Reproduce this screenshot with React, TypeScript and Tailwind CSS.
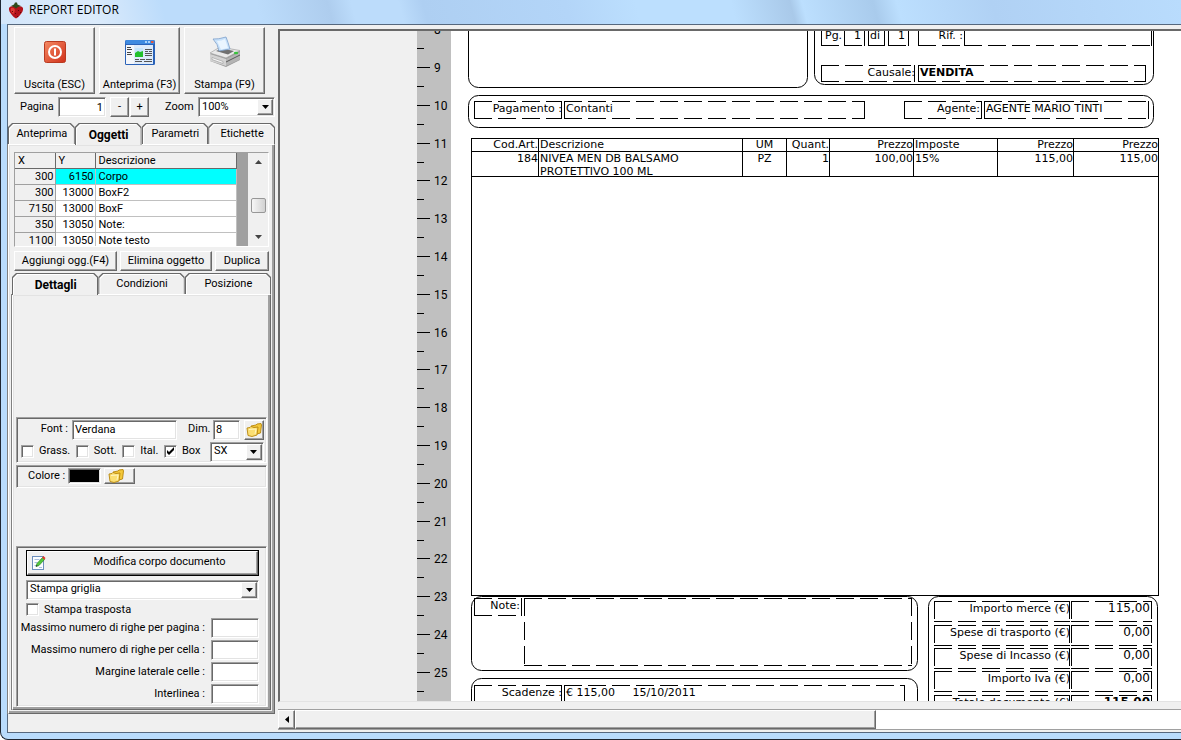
import React, { useState } from "react";

// classic win32 bevels
const RAISED =
  "bg-[#f0f0f0] border border-t-white border-l-white border-r-[#696969] border-b-[#696969] shadow-[inset_-1px_-1px_0_#a0a0a0]";
const SUNKEN =
  "bg-white border border-t-[#a0a0a0] border-l-[#a0a0a0] border-r-white border-b-white shadow-[inset_1px_1px_0_#696969,inset_-1px_-1px_0_#e3e3e3]";
const GROUP =
  "border border-t-[#a0a0a0] border-l-[#a0a0a0] border-r-white border-b-white shadow-[inset_1px_1px_0_#696969,inset_-1px_-1px_0_#e3e3e3]";
const PANEL =
  "border border-t-white border-l-white border-r-[#696969] border-b-[#696969] shadow-[inset_-2px_-2px_0_#a0a0a0,inset_1px_1px_0_#e3e3e3,-1px_0_0_#808080]";

const StrawberryIcon = () => (
  <svg width="16" height="17" viewBox="0 0 16 17">
    <path d="M1 6 Q2 3.5 8 4 Q14 3.5 15 6 Q15.5 9 12.5 12.5 Q10 16 8 16.5 Q6 16 3.5 12.5 Q0.5 9 1 6z" fill="#b3131b" />
    <path d="M3 6 Q6 5 7 8 Q6 12 5 12 Q2 9 3 6z" fill="#dd3a34" />
    <path d="M3 4 L6 2.5 L7 0.5 L9 0.5 L9.5 2.5 L13 4 L10 5 L8 6.5 L6 5z" fill="#2e4a1c" />
    <path d="M10 8h1v1h-1z M7 11h1v1h-1z M4 9h1v1h-1z M12 10h1v1h-1z M9 14h1v1h-1z" fill="#5e070c" />
  </svg>
);

const PowerIcon = () => (
  <svg width="24" height="24" viewBox="0 0 24 24">
    <defs>
      <linearGradient id="pw" x1="0" y1="0" x2="1" y2="1">
        <stop offset="0" stopColor="#f58a63" />
        <stop offset="1" stopColor="#d0301a" />
      </linearGradient>
    </defs>
    <rect x="1.5" y="1.5" width="21" height="21" rx="2" fill="url(#pw)" stroke="#b93a20" />
    <circle cx="12" cy="12" r="6" fill="none" stroke="#fff" strokeWidth="2" />
    <path d="M12 8.5v7" stroke="#fff" strokeWidth="2" />
  </svg>
);

const PreviewIcon = () => (
  <svg width="32" height="26" viewBox="0 0 32 26">
    <rect x="1" y="1" width="30" height="25" rx="1.5" fill="#2a62b8" />
    <rect x="1.5" y="1" width="29" height="4" rx="1" fill="#3f8ae0" />
    <path d="M21 2h2v2h-2z M24 2h2v2h-2z" fill="#a9d2fa" />
    <path d="M27 2h2.5v2h-2.5z" fill="#e2553b" />
    <rect x="2" y="6" width="8" height="19" fill="#f4f6fa" />
    <rect x="10" y="6" width="19" height="19" fill="#ddeafa" />
    <path d="M3 8.5h4 M3 10.5h5 M3 13.5h4 M3 15.5h5" stroke="#444" />
    <rect x="11" y="9" width="8" height="5" fill="#c5e4fb" />
    <path d="M11 14l3-2 2 1 3-1v6h-8z" fill="#22c02c" />
    <path d="M21 10.5h7 M21 12.5h3 M25 12.5h3 M21 14.5h7 M21 16.5h7 M11 20.5h4 M16 20.5h5 M22 20.5h6 M11 22.5h7 M20 22.5h8" stroke="#555" />
  </svg>
);

const PrinterIcon = () => (
  <svg width="32" height="32" viewBox="0 0 32 32">
    <path d="M1 18 L12 11 L31 15 L31 24 L17 31 L1 25z" fill="#9a9a9a" />
    <path d="M1 17 L11 11 L31 14.500 L17 22z" fill="#e9e9e9" stroke="#a5a5a5" strokeWidth="0.7" />
    <path d="M1 18 L17 23 L17 30 L1 25z" fill="#d3d3d3" />
    <path d="M17 23 L31 16 L31 23.500 L17 30z" fill="#b4b4b4" />
    <path d="M17 26 L31 19" stroke="#5a5a5a" />
    <path d="M3 21.500 L14 25.500 L14 27.500 L3 23.500z" fill="#f8f8f8" stroke="#8a8a8a" strokeWidth="0.5" />
    <path d="M7 15 L19 18.500 L25 15 L13 12.500z" fill="#707070" />
    <path d="M4 3 Q9 3.500 17 1 Q19 6 21 13 L10 15 Q9 8 4 3z" fill="#c8e2fb" stroke="#7d9fca" strokeWidth="0.800" />
    <path d="M8 5 Q13 5 16 3 L19 12 L12 13.500z" fill="#eaf5ff" />
    <ellipse cx="27" cy="17" rx="2.200" ry="1.300" fill="#37c33a" />
  </svg>
);

const FolderIcon = () => (
  <svg width="16" height="14" viewBox="0 0 16 14">
    <path d="M5 3 L10 2 L11 1 L15 0.500 L15.500 2 L14.500 10 L7 12z" fill="#f3c83a" stroke="#b8860b" strokeWidth="0.900" />
    <path d="M1 5 L4 4.500 L5 3.500 L8 4.500 L12 4 L11 12 L6 13.500 L2 12.500z" fill="#fbdf73" stroke="#b8860b" strokeWidth="0.900" />
    <path d="M3 6.500 L10 6 L9 11" stroke="#fff4bf" fill="none" />
  </svg>
);

const EditIcon = () => (
  <svg width="14" height="15" viewBox="0 0 14 15">
    <rect x="0.500" y="1.500" width="11" height="13" fill="#fbfdff" stroke="#6c8fbd" />
    <path d="M2.500 4.500h5 M2.500 7.500h3 M2.500 10.500h2 M7 12.500h3" stroke="#a9bfdd" />
    <path d="M4 11.500 L5 8.500 L10.500 2.500 L12.500 4.500 L7 10.500z" fill="#53c93d" stroke="#2b8222" strokeWidth="0.700" />
    <path d="M10 2.500 L11.500 1 L13.500 3 L12.300 4.800z" fill="#e23b2d" />
    <path d="M4 11.500l0.500-1.600 1.200 1.100z" fill="#222" />
  </svg>
);

interface TabsProps {
  items: string[];
  active: string;
  onSelect: (name: string) => void;
}

const CHAMFER = "[clip-path:polygon(0_100%,0_4px,4px_0,calc(100%-4px)_0,100%_4px,100%_100%)]";

const Tabs: React.FC<TabsProps> = ({ items, active, onSelect }) => (
  <div role="tablist" className="flex">
    {items.map((item) => (
      <button
        key={item}
        role="tab"
        aria-selected={item === active}
        onClick={() => onSelect(item)}
        className={`flex h-[21px] flex-1 bg-[#696969] px-px pt-px ${CHAMFER} ${item === active ? "z-10 -mb-px h-[22px]" : ""}`}
      >
        <span className={`flex flex-1 bg-white pt-px pl-px ${CHAMFER}`}>
          <span
            className={`flex flex-1 items-center justify-center bg-[#f0f0f0] ${CHAMFER} ${item === active ? "text-[12px] font-bold" : ""}`}
          >
            {item}
          </span>
        </span>
      </button>
    ))}
  </div>
);

interface SelectProps {
  label: string;
  options: string[];
  className: string;
}

const Select: React.FC<SelectProps> = ({ label, options, className }) => (
  <div className={`relative h-5 ${SUNKEN} ${className}`}>
    <select aria-label={label} className="h-full w-full appearance-none bg-transparent pl-[3px] outline-none">
      {options.map((o) => (
        <option key={o}>{o}</option>
      ))}
    </select>
    <span className={`pointer-events-none absolute top-px right-px bottom-px flex w-4 items-center justify-center ${RAISED}`}>
      <svg width="7" height="4" viewBox="0 0 7 4">
        <path d="M0 0h7L3.500 4z" />
      </svg>
    </span>
  </div>
);

const Check: React.FC<{ label: string; checked?: boolean }> = ({ label, checked }) => (
  <label className="flex items-center gap-[5px]">
    <span className="grid">
      <input
        type="checkbox"
        defaultChecked={checked}
        className={`peer col-start-1 row-start-1 h-[13px] w-[13px] appearance-none ${SUNKEN}`}
      />
      <svg
        width="13"
        height="13"
        viewBox="0 0 13 13"
        className="pointer-events-none invisible col-start-1 row-start-1 peer-checked:visible"
      >
        <path d="M3 5v3l2 2 5-5v-3l-5 5z" />
      </svg>
    </span>
    {label}
  </label>
);

const objects = [
  { x: 300, y: 6150, name: "Corpo" },
  { x: 300, y: 13000, name: "BoxF2" },
  { x: 7150, y: 13000, name: "BoxF" },
  { x: 350, y: 13050, name: "Note:" },
  { x: 1100, y: 13050, name: "Note testo" },
];

const ObjectGrid = () => {
  const [selected, setSelected] = useState(0);
  return (
    <div className={`mx-[5px] mt-[7px] flex h-[95px] overflow-hidden ${GROUP}`}>
      <table className="h-fit flex-1 table-fixed border-collapse leading-[14px]">
        <colgroup>
          <col className="w-10" />
          <col className="w-10" />
          <col />
        </colgroup>
        <thead>
          <tr className="bg-[#f0f0f0] text-left">
            <th className="border-r border-b border-[#696969] pt-px pl-[3px] font-normal">X</th>
            <th className="border-r border-b border-[#696969] pt-px pl-[3px] font-normal">Y</th>
            <th className="border-r border-b border-[#696969] pt-px pl-[3px] font-normal">Descrizione</th>
          </tr>
        </thead>
        <tbody>
          {objects.map((o, i) => (
            <tr key={i} onClick={() => setSelected(i)} className={i === selected ? "bg-[#00ffff]" : "bg-white"}>
              <td className="border-r border-b border-[#a0a0a0] bg-[#f0f0f0] pt-px pr-px text-right">{o.x}</td>
              <td className="border-r border-b border-[#c0c0c0] pt-px pr-px text-right">{o.y}</td>
              <td className="border-r border-b border-[#c0c0c0] pt-px pl-[3px]">{o.name}</td>
            </tr>
          ))}
        </tbody>
      </table>
      <div className="w-[11px] bg-[#a0a0a0]" />
      <div className="flex w-5 flex-col items-center justify-between bg-[#f0f0f0] py-[7px]">
        <svg width="7" height="4" viewBox="0 0 7 4">
          <path d="M0 4h7L3.500 0z" fill="#444" />
        </svg>
        <div className="mt-3 h-[15px] w-[15px] rounded-xs border border-[#979797] bg-linear-to-r from-[#f6f6f6] to-[#d2d2d2]" />
        <svg width="7" height="4" viewBox="0 0 7 4">
          <path d="M0 0h7L3.500 4z" fill="#444" />
        </svg>
      </div>
    </div>
  );
};

const numericFields = [
  "Massimo numero di righe per pagina :",
  "Massimo numero di righe per cella :",
  "Margine laterale celle :",
  "Interlinea :",
];

const SidePanel = () => {
  const [mainTab, setMainTab] = useState("Oggetti");
  const [detailTab, setDetailTab] = useState("Dettagli");

  return (
    <aside className="flex w-[267px] shrink-0 flex-col pt-[2px] pb-[18px]">
      <div className="flex gap-1 pl-[6px]">
        {[
          { label: "Uscita (ESC)", icon: <PowerIcon /> },
          { label: "Anteprima (F3)", icon: <PreviewIcon /> },
          { label: "Stampa (F9)", icon: <PrinterIcon /> },
        ].map((b) => (
          <button key={b.label} className={`flex h-[67px] w-[81px] flex-col items-center ${RAISED}`}>
            <span className="flex h-[49px] items-center">{b.icon}</span>
            {b.label}
          </button>
        ))}
      </div>

      <div className="mt-[3px] mb-[6px] flex items-center pl-3">
        <label htmlFor="pagina" className="w-[38px]">
          Pagina
        </label>
        <input id="pagina" defaultValue="1" className={`h-5 w-12 pr-[2px] text-right outline-none ${SUNKEN}`} />
        <button className={`ml-1 h-5 w-[19px] ${RAISED}`}>-</button>
        <button className={`ml-px h-5 w-[19px] ${RAISED}`}>+</button>
        <span className="ml-4 w-[33px]">Zoom</span>
        <Select label="Zoom" options={["100%", "75%", "50%"]} className="flex-1" />
      </div>

      <Tabs items={["Anteprima", "Oggetti", "Parametri", "Etichette"]} active={mainTab} onSelect={setMainTab} />
      <div className={`flex flex-1 flex-col pb-[3px] ${PANEL}`}>
        <ObjectGrid />
        <div className="mx-[5px] mt-1 mb-[2px] flex gap-[3px]">
          <button className={`h-5 w-[103px] ${RAISED}`}>Aggiungi ogg.(F4)</button>
          <button className={`h-5 w-[92px] ${RAISED}`}>Elimina oggetto</button>
          <button className={`h-5 flex-1 ${RAISED}`}>Duplica</button>
        </div>

        <div className="mx-[3px] flex flex-1 flex-col">
          <Tabs items={["Dettagli", "Condizioni", "Posizione"]} active={detailTab} onSelect={setDetailTab} />
          <div className={`flex flex-1 flex-col px-[3px] pb-[2px] ${PANEL}`}>
            <div className="flex-21" />
            <div className={`flex flex-col gap-[2px] pt-[2px] pr-[2px] pl-1 ${GROUP}`}>
              <div className="flex items-center">
                <label htmlFor="font" className="w-[51px] pr-1 text-right">
                  Font :
                </label>
                <input id="font" defaultValue="Verdana" className={`h-5 w-[105px] pl-[2px] outline-none ${SUNKEN}`} />
                <label htmlFor="dim" className="ml-[11px] w-[25px]">
                  Dim.
                </label>
                <input id="dim" defaultValue="8" className={`h-5 w-[27px] pl-[2px] outline-none ${SUNKEN}`} />
                <button aria-label="Scegli font" className={`ml-auto flex h-5 w-5 items-center justify-center ${RAISED}`}>
                  <FolderIcon />
                </button>
              </div>
              <div className="flex items-center justify-between">
                <Check label="Grass." />
                <Check label="Sott." />
                <Check label="Ital." />
                <Check label="Box" checked />
                <Select label="Allineamento" options={["SX", "CX", "DX"]} className="ml-1 w-[54px]" />
              </div>
            </div>
            <div className={`mt-[2px] flex h-[23px] items-center pl-[11px] ${GROUP}`}>
              <span className="w-10">Colore :</span>
              <span className={`flex h-4 w-[33px] p-px ${SUNKEN}`}>
                <span className="flex-1 bg-black" />
              </span>
              <button aria-label="Scegli colore" className={`ml-[3px] flex h-4 w-[31px] items-center pl-[3px] ${RAISED}`}>
                <FolderIcon />
              </button>
            </div>
            <div className="flex-10" />
            <div className={`flex flex-col pt-[3px] pr-[7px] pl-[9px] ${GROUP}`}>
              <div className="flex border border-black">
                <button className={`flex h-6 flex-1 items-center pl-1 ${RAISED}`}>
                  <EditIcon />
                  <span className="flex-1 pl-4">Modifica corpo documento</span>
                </button>
              </div>
              <Select label="Tipo stampa" options={["Stampa griglia", "Stampa testo"]} className="mt-1 mb-[2px]" />
              <Check label="Stampa trasposta" />
              {numericFields.map((f) => (
                <label key={f} className="mb-[2px] flex items-center justify-end gap-[6px] whitespace-nowrap">
                  {f}
                  <input className={`h-5 w-12 outline-none ${SUNKEN}`} />
                </label>
              ))}
            </div>
          </div>
        </div>
      </div>
    </aside>
  );
};

// one tick per half centimetre, 8 to 25
const Ruler = () => {
  const cm = Array.from({ length: 18 }, (_, i) => i + 8);
  return (
    <svg className="h-full w-[34px] shrink-0 bg-[#c0c0c0]" fontSize="12" shapeRendering="crispEdges">
      {cm.map((n) => {
        const y = Math.round(36 + (n - 9) * 37.8);
        return (
          <g key={n}>
            <rect x="0" y={y} width="13" height="1" />
            <rect x="0" y={y + 19} width="7" height="1" />
            <text x="17" y={y + 5}>
              {n}
            </text>
          </g>
        );
      })}
    </svg>
  );
};

// x, y, width, height on the page
const roundedBoxes = [
  [17, -40, 339, 96],
  [363, -40, 339, 93],
  [17, 64, 685, 32],
  [20, 565, 446, 74],
  [20, 647, 446, 74],
  [477, 565, 229, 150],
];

interface ReportField {
  x: number;
  y: number;
  w: number;
  h: number;
  text: string;
  cls?: string;
}

const fields: ReportField[] = [
  { x: 370, y: -3, w: 23, h: 17, text: "Pg.", cls: "pl-1" },
  { x: 393, y: -3, w: 20, h: 17, text: "1", cls: "text-right pr-1" },
  { x: 417, y: -3, w: 16, h: 17, text: "di" },
  { x: 437, y: -3, w: 20, h: 17, text: "1", cls: "text-right pr-1" },
  { x: 467, y: -3, w: 46, h: 17, text: "Rif. :", cls: "text-right pr-[2px]" },
  { x: 513, y: -3, w: 187, h: 17, text: "" },
  { x: 370, y: 34, w: 93, h: 16, text: "Causale:", cls: "text-right" },
  { x: 467, y: 34, w: 227, h: 16, text: "VENDITA", cls: "pl-[2px] font-bold" },
  { x: 23, y: 70, w: 87, h: 17, text: "Pagamento :", cls: "text-right" },
  { x: 113, y: 70, w: 300, h: 17, text: "Contanti" },
  { x: 453, y: 70, w: 77, h: 17, text: "Agente:", cls: "text-right pr-[2px]" },
  { x: 533, y: 70, w: 164, h: 17, text: "AGENTE MARIO TINTI" },
  { x: 23, y: 567, w: 47, h: 17, text: "Note:", cls: "text-right pr-[2px]" },
  { x: 73, y: 567, w: 387, h: 67, text: "" },
  { x: 23, y: 654, w: 87, h: 30, text: "Scadenze :", cls: "text-right" },
  { x: 113, y: 654, w: 340, h: 30, text: "€ 115,00     15/10/2011" },
];

const totals = [
  { y: 570, label: "Importo merce (€)", value: "115,00" },
  { y: 594, label: "Spese di trasporto (€)", value: "0,00" },
  { y: 617, label: "Spese di Incasso (€)", value: "0,00" },
  { y: 640, label: "Importo Iva (€)", value: "0,00" },
  { y: 664, label: "Totale documento (€)", value: "115,00", cls: "font-bold" },
];

totals.forEach((t) => {
  fields.push({ x: 483, y: t.y, w: 135, h: 20, text: t.label, cls: "text-right" });
  fields.push({ x: 620, y: t.y, w: 80, h: 20, text: t.value, cls: `text-right text-[12px] pr-[2px] ${t.cls ?? ""}` });
});

const Field: React.FC<ReportField> = ({ x, y, w, h, text, cls = "pl-[2px]" }) => (
  <div
    className={`absolute pt-px leading-[13px] whitespace-pre ${cls}`}
    style={{ left: x, top: y, width: w + 1, height: h + 1 }}
  >
    <svg className="absolute inset-0 h-full w-full" shapeRendering="crispEdges">
      <g stroke="#000" strokeDasharray="18 6">
        <path d={`M0 .5H${w + 1}`} />
        <path d={`M0 ${h + 0.5}H${w + 1}`} />
        <path d={`M.5 0V${h + 1}`} />
        <path d={`M${w + 0.5} 0V${h + 1}`} />
      </g>
    </svg>
    {text}
  </div>
);

const bodyColumns = [
  { title: "Cod.Art.", value: "184", col: "w-[67px]", cls: "text-right" },
  { title: "Descrizione", value: "NIVEA MEN DB BALSAMO PROTETTIVO 100 ML", col: "w-[204px]", cls: "text-left pl-px pr-10" },
  { title: "UM", value: "PZ", col: "w-[44px]", cls: "text-center" },
  { title: "Quant.", value: "1", col: "w-[43px]", cls: "text-right" },
  { title: "Prezzo", value: "100,00", col: "w-[84px]", cls: "text-right" },
  { title: "Imposte", value: "15%", col: "w-[84px]", cls: "text-left pl-px" },
  { title: "Prezzo", value: "115,00", col: "w-[76px]", cls: "text-right" },
  { title: "Prezzo", value: "115,00", col: "w-[85px]", cls: "text-right pr-px" },
];

const ReportPage = () => (
  <div className="relative flex-1 overflow-hidden bg-white font-['DejaVu_Sans',sans-serif] text-[11px] text-black">
    <svg className="absolute inset-0 h-full w-full">
      {roundedBoxes.map(([x, y, w, h], i) => (
        <rect key={i} x={x + 0.5} y={y + 0.5} width={w} height={h} rx="10" fill="none" stroke="#000" />
      ))}
    </svg>
    <div className="absolute top-[107px] left-5 h-[458px] w-[688px] border border-black">
      <table className="w-full table-fixed border-separate border-spacing-0 leading-3">
        <colgroup>
          {bodyColumns.map((c, i) => (
            <col key={i} className={c.col} />
          ))}
        </colgroup>
        <thead>
          <tr>
            {bodyColumns.map((c, i) => (
              <th key={i} className={`border-r border-b border-black font-normal last:border-r-0 ${c.cls}`}>
                {c.title}
              </th>
            ))}
          </tr>
        </thead>
        <tbody>
          <tr>
            {bodyColumns.map((c, i) => (
              <td key={i} className={`border-r border-b border-black align-top last:border-r-0 ${c.cls}`}>
                <div className="-mb-[2px] leading-[13px]">{c.value}</div>
              </td>
            ))}
          </tr>
        </tbody>
      </table>
    </div>
    {fields.map((f, i) => (
      <Field key={i} {...f} />
    ))}
  </div>
);

const App: React.FC = () => {
  return (
    <div className="flex h-screen flex-col overflow-hidden rounded-bl-lg border-b border-l border-[#1f2733] bg-[#b9dcfd] pb-[6px] pl-[6px] font-[Roboto,'Liberation_Sans',Arial,sans-serif] text-[11px] text-black">
      <header className="-ml-[6px] flex h-6 shrink-0 items-center gap-[5px] bg-[linear-gradient(75deg,#d3e6fa_0%,#dcebfb_8%,#bcdcfb_14%,#bcdcfb_22%,#aecdee_28%,#bcdcfb_30%,#bcdcfb_34%,#aecff2_36%,#b3d5f8_48%,#bcdffe_54%,#bcdffe_62%,#a9c9e9_67%,#bcdffe_68%,#a9cbec_74%,#bcdffe_76%,#b0d1f4_84%,#b9dcfd_100%)] pb-1 pl-[7px]">
        <StrawberryIcon />
        <h1 className="font-['Open_Sans','Noto_Sans',sans-serif] text-[12px]">REPORT EDITOR</h1>
      </header>
      <main className="flex min-h-0 flex-1 gap-[3px] border-t border-b border-l border-[#56687e] bg-[#f0f0f0]">
        <SidePanel />
        <section className="flex min-w-0 flex-1 flex-col pt-1 pb-[2px]">
          <div className="flex min-h-0 flex-1 border-t-2 border-b border-l-2 border-t-[#696969] border-b-[#e3e3e3] border-l-[#696969] pl-[137px]">
            <Ruler />
            <ReportPage />
          </div>
          <div className="mt-[7px] flex h-[21px] shrink-0 border-t border-b border-[#a0a0a0] bg-white">
            <button aria-label="Scorri a sinistra" className={`flex w-[17px] items-center justify-center ${RAISED}`}>
              <svg width="4" height="7" viewBox="0 0 4 7">
                <path d="M4 0v7L0 3.500z" />
              </svg>
            </button>
            <div className={`flex-19 ${RAISED}`} />
            <div className="flex-10" />
          </div>
        </section>
      </main>
    </div>
  );
};

export default App;
